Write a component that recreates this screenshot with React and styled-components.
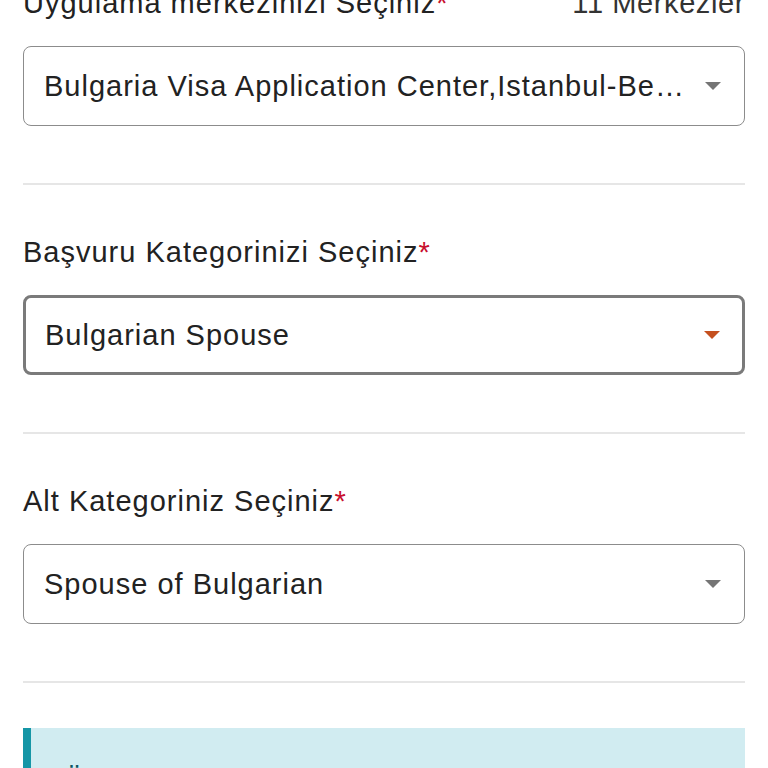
import React from 'react';
import styled, { createGlobalStyle } from 'styled-components';

const GlobalStyle = createGlobalStyle`
  html, body {
    margin: 0;
    padding: 0;
    background: #ffffff;
    overflow: hidden;
  }
  body {
    font-family: "Liberation Sans", Arial, sans-serif;
    color: #222222;
  }
`;

// the page is scrolled a little, so the first label is cut off at the top
const Page = styled.div`
  margin-top: -15px;
  padding: 0 23px;
  display: flex;
  flex-direction: column;
`;

const Section = styled.section`
  display: flex;
  flex-direction: column;
`;

const LabelRow = styled.div`
  display: flex;
  justify-content: space-between;
  align-items: center;
  height: 36px;
  font-size: 29px;
  line-height: 36px;
  letter-spacing: 1px;
  margin-bottom: 25px;
`;

const Required = styled.span`
  color: #c8102e;
`;

const Count = styled.span`
  color: #333333;
  letter-spacing: 0.6px;
`;

const SelectBox = styled.div`
  box-sizing: border-box;
  height: 80px;
  border: ${p => (p.$focused ? '3px solid #7a7a7a' : '1.5px solid #8c8c8c')};
  border-radius: 8px;
  display: flex;
  align-items: center;
  padding: 0 ${p => (p.$focused ? '21px' : '22px')} 0 ${p => (p.$focused ? '19px' : '20px')};
  gap: 9px;
  background: #fff;
`;

const Value = styled.span`
  flex: 1;
  min-width: 0;
  font-size: 29px;
  letter-spacing: 1px;
  white-space: nowrap;
  overflow: hidden;
  text-overflow: ellipsis;
  color: #222222;
`;

const Divider = styled.hr`
  border: none;
  height: 2px;
  background: #e6e6e6;
  margin: 57px 0 49px;
`;

const Alert = styled.div`
  margin-top: -4px;
  background: #d1ecf1;
  border-left: 8px solid #1596a6;
  padding: 34px 32px;
  font-size: 29px;
  line-height: 36px;
  letter-spacing: 1px;
  color: #0c5460;
`;

function Caret({ active }) {
  return (
    <svg width="18" height="10" viewBox="0 0 18 10">
      <path d="M1 1h16L9 9z" fill={active ? '#c5501f' : '#757575'} />
    </svg>
  );
}

function Field({ label, value, count, focused }) {
  return (
    <Section>
      <LabelRow>
        <span>
          {label}
          <Required>*</Required>
        </span>
        {count && <Count>{count}</Count>}
      </LabelRow>
      <SelectBox $focused={focused}>
        <Value>{value}</Value>
        <Caret active={focused} />
      </SelectBox>
      <Divider />
    </Section>
  );
}

export default function App() {
  return (
    <>
      <GlobalStyle />
      <Page>
        <Field
          label="Uygulama merkezinizi Seçiniz"
          count="11 Merkezler"
          value="Bulgaria Visa Application Center,Istanbul-Beşiktaş"
        />
        <Field label="Başvuru Kategorinizi Seçiniz" value="Bulgarian Spouse" focused />
        <Field label="Alt Kategoriniz Seçiniz" value="Spouse of Bulgarian" />
        <Alert>Ön başvuru için lütfen belgelerinizi hazırlayınız.</Alert>
      </Page>
    </>
  );
}
